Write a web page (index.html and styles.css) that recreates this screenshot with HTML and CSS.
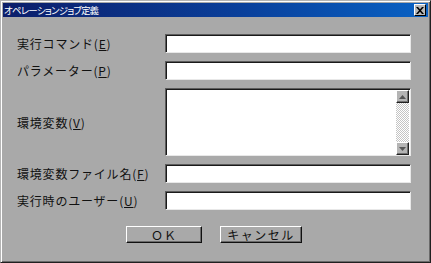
FILE: index.html
```html
<!DOCTYPE html>
<html lang="ja">
<head>
<meta charset="utf-8">
<link rel="stylesheet" href="styles.css">
</head>
<body>
<div class="window">
  <div class="titlebar">
    <span class="title">オペレーションジョブ定義</span>
    <span class="close"><svg width="8" height="7" viewBox="0 0 8 7"><path d="M0 0h2l2 2.3L6 0h2L5 3.5 8 7H6L4 4.7 2 7H0l3-3.5z" fill="#000"/></svg></span>
  </div>
  <div class="form">
    <div class="lbl">実行コマンド(<u>E</u>)</div>
    <div class="field"></div>
    <div class="lbl">パラメーター(<u>P</u>)</div>
    <div class="field"></div>
    <div class="lbl">環境変数(<u>V</u>)</div>
    <div class="field area">
      <div class="scroll">
        <div class="sbtn"><svg width="7" height="4" viewBox="0 0 7 4"><path d="M3.5 0L7 4H0z" fill="#555"/></svg></div>
        <div class="track"></div>
        <div class="sbtn"><svg width="7" height="4" viewBox="0 0 7 4"><path d="M0 0h7L3.5 4z" fill="#555"/></svg></div>
      </div>
    </div>
    <div class="lbl">環境変数ファイル名(<u>F</u>)</div>
    <div class="field"></div>
    <div class="lbl">実行時のユーザー(<u>U</u>)</div>
    <div class="field"></div>
  </div>
  <div class="buttons">
    <div class="btn ok">ＯＫ</div>
    <div class="btn cancel">キャンセル</div>
  </div>
</div>
</body>
</html>
```
FILE: styles.css
```css
html, body {
  margin: 0;
  padding: 0;
  background: #a9a9a9;
}
body {
  font-family: "Noto Sans CJK JP", "DejaVu Sans", sans-serif;
}
.window {
  width: 431px;
  height: 263px;
  box-sizing: border-box;
  background: #a9a9a9;
  border: 1px solid;
  border-color: #b4b4b4 #202020 #202020 #b4b4b4;
  box-shadow: inset 1px 1px 0 #ffffff, inset -1px -1px 0 #6a6a6a;
  padding: 2px;
}
.titlebar {
  height: 14px;
  background: linear-gradient(to right, #0c1e6a, #0a3f9a 55%, #0a62c4);
  display: flex;
  align-items: center;
  justify-content: space-between;
  padding: 0 2px 0 1px;
}
.title {
  color: #ffffff;
  font-size: 9.5px;
  line-height: 14px;
  font-feature-settings: "palt";
  letter-spacing: -0.8px;
}
.close {
  width: 10px;
  height: 10px;
  background: #b8b8b8;
  border: 1px solid;
  border-color: #ffffff #000000 #000000 #ffffff;
  display: flex;
  align-items: center;
  justify-content: center;
}
.form {
  margin-top: 17px;
  padding-left: 14px;
  display: grid;
  grid-template-columns: 148px 246px;
  grid-template-rows: 19px 19px 68px 19px 19px;
  row-gap: 8px;
}
.lbl {
  display: flex;
  align-items: center;
  font-size: 12px;
  color: #111111;
  letter-spacing: 0.8px;
  white-space: nowrap;
}
.lbl u {
  text-underline-offset: 1px;
}
.field {
  box-sizing: border-box;
  background: #ffffff;
  border: 1px solid;
  border-color: #5c5c5c #e8e8e8 #e8e8e8 #5c5c5c;
  box-shadow: inset 1px 1px 0 #1a1a1a;
}
.area {
  display: flex;
  justify-content: flex-end;
  padding: 1px 1px 0 0;
}
.scroll {
  width: 13px;
  display: flex;
  flex-direction: column;
}
.sbtn {
  height: 13px;
  box-sizing: border-box;
  background: #b4b4b4;
  border: 1px solid;
  border-color: #ffffff #202020 #202020 #ffffff;
  box-shadow: inset -1px -1px 0 #707070;
  display: flex;
  align-items: center;
  justify-content: center;
}
.track {
  flex: 1;
  background-color: #ffffff;
  background-image: repeating-conic-gradient(#c4c4c4 0 25%, #ffffff 0 50%);
  background-size: 2px 2px;
}
.buttons {
  margin-top: 16px;
  padding-left: 123px;
  display: flex;
  gap: 18px;
}
.btn {
  height: 17px;
  box-sizing: border-box;
  border: 1px solid;
  border-color: #ffffff #101010 #101010 #ffffff;
  box-shadow: inset -1px -1px 0 #6a6a6a;
  background: #a9a9a9;
  display: flex;
  align-items: center;
  justify-content: center;
  font-size: 12px;
  color: #111111;
}
.ok {
  width: 76px;
  letter-spacing: 1px;
}
.cancel {
  width: 82px;
  letter-spacing: 1.5px;
}
```
